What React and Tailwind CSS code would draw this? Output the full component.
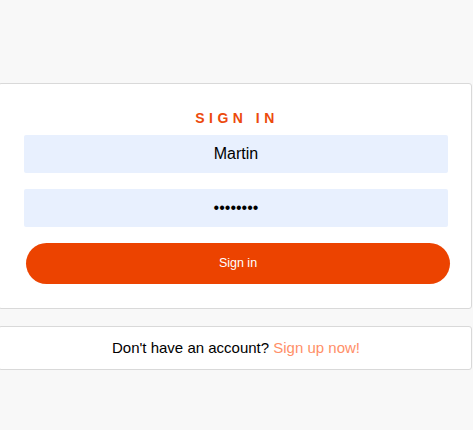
import React from "react";

export default function App() {
  return (
    <div className="w-[473px] h-[430px] bg-[#f8f8f8] overflow-hidden pt-[83px] font-['Liberation_Sans',Arial,sans-serif]">
      <div className="w-[474px] ml-[-2px] bg-white border border-[#d9d9d9] rounded-[3px] h-[226px] flex flex-col items-center pt-[24px]">
        <div className="text-[14px] leading-[20px] font-bold tracking-[4.5px] text-[#ec4a0c] pl-[4px] h-[27px]">SIGN IN</div>
        <input
          readOnly
          value="Martin"
          className="w-[424px] h-[38px] ml-[2px] bg-[#e8f0fe] rounded-[2px] text-center text-[16px] text-black outline-none"
        />
        <input
          readOnly
          type="password"
          value="password"
          className="mt-[16px] w-[424px] h-[38px] ml-[2px] bg-[#e8f0fe] rounded-[2px] text-center text-[16px] text-black outline-none"
        />
        <button className="mt-[16px] w-[424px] h-[41px] ml-[6px] rounded-full bg-[#ec4300] text-white text-[12.5px]">
          Sign in
        </button>
      </div>
      <div className="mt-[17px] w-[474px] ml-[-2px] h-[44px] bg-white border border-[#d9d9d9] rounded-[3px] flex items-center justify-center text-[15px] text-black pl-[2px]">
        <span>Don't have an account?&nbsp;</span>
        <span className="text-[#ff8f68]">Sign up now!</span>
      </div>
    </div>
  );
}
